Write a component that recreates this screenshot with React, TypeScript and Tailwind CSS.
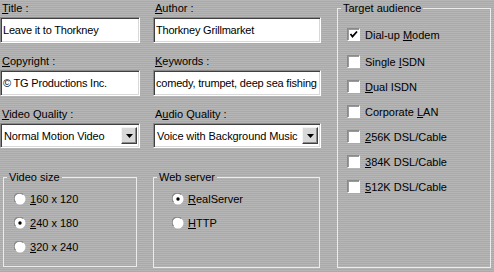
import React from "react";

const sunken =
  "bg-white border border-t-[#8a8a8a] border-l-[#8a8a8a] border-b-white border-r-white shadow-[inset_1px_1px_0_#404040,inset_-1px_-1px_0_#d8d8d8]";

function Field({ label, value }: { label: React.ReactNode; value: string }) {
  return (
    <div className="flex flex-col">
      <div className="h-[16px] pl-[2px]">{label}</div>
      <div className={`h-[26px] ${sunken} flex items-center pl-[2px] tracking-[-0.2px] whitespace-nowrap overflow-hidden`}>
        {value}
      </div>
    </div>
  );
}

function Combo({ label, value }: { label: React.ReactNode; value: string }) {
  return (
    <div className="flex flex-col">
      <div className="h-[16px] pl-[2px]">{label}</div>
      <div className={`h-[25px] ${sunken} flex items-center justify-between pl-[3px] pr-[2px]`}>
        <span className="whitespace-nowrap tracking-[-0.1px]">{value}</span>
        <div className="w-[16px] h-[17px] bg-[#d8d8d8] border border-t-[#f4f4f4] border-l-[#f4f4f4] border-b-[#404040] border-r-[#404040] shadow-[inset_-1px_-1px_0_#8a8a8a] flex items-center justify-center">
          <svg width="7" height="4" viewBox="0 0 7 4">
            <path d="M0 0 H7 L3.5 4 Z" fill="black" />
          </svg>
        </div>
      </div>
    </div>
  );
}

function Radio({ checked }: { checked?: boolean }) {
  return (
    <svg width="12" height="12" viewBox="0 0 12 12" className="shrink-0">
      <circle cx="6" cy="6" r="5.5" fill="white" />
      <path d="M1.6 9.2 A5 5 0 0 1 9.2 1.6" stroke="#8a8a8a" strokeWidth="1.2" fill="none" />
      {checked && <circle cx="6" cy="6" r="1.7" fill="black" />}
    </svg>
  );
}

function Check({ checked }: { checked?: boolean }) {
  return (
    <div className="w-[13px] h-[13px] shrink-0 bg-white border border-t-[#8a8a8a] border-l-[#8a8a8a] border-b-white border-r-white shadow-[inset_1px_1px_0_#9a9a9a] flex items-center justify-center">
      {checked && (
        <svg width="9" height="9" viewBox="0 0 9 9">
          <path d="M1.5 4 L3.5 6.5 L8 1.5" stroke="black" strokeWidth="1.8" fill="none" />
        </svg>
      )}
    </div>
  );
}

const u = (c: string) => <span className="underline underline-offset-[1px]">{c}</span>;

export default function App() {
  const audiences: [React.ReactNode, boolean][] = [
    [<>Dial-up {u("M")}odem</>, true],
    [<>Single {u("I")}SDN</>, false],
    [<>{u("D")}ual ISDN</>, false],
    [<>Corporate {u("L")}AN</>, false],
    [<>{u("2")}56K DSL/Cable</>, false],
    [<>{u("3")}84K DSL/Cable</>, false],
    [<>{u("5")}12K DSL/Cable</>, false],
  ];

  return (
    <div className="w-[494px] h-[272px] overflow-hidden flex bg-[repeating-linear-gradient(to_bottom,#b6b6b6_0px,#b6b6b6_1px,#aaaaaa_1px,#aaaaaa_2px)] font-['Liberation_Sans',Arial,sans-serif] text-[11px] leading-[14px] text-black">
      <div className="w-[321px] pt-[1px] grid grid-cols-[140px_168px] gap-x-[13px] gap-y-[11px] content-start">
        <Field label={<>{u("T")}itle :</>} value="Leave it to Thorkney" />
        <Field label={<>{u("A")}uthor :</>} value="Thorkney Grillmarket" />
        <Field label={<>{u("C")}opyright :</>} value="© TG Productions Inc." />
        <Field label={<>{u("K")}eywords :</>} value="comedy, trumpet, deep sea fishing" />
        <Combo label={<>{u("V")}ideo Quality :</>} value="Normal Motion Video" />
        <Combo label={<>A{u("u")}dio Quality :</>} value="Voice with Background Music" />

        <fieldset className="mt-[11px] ml-[3px] w-[134px] h-[97px] border border-[#ececec]">
          <legend className="ml-[3px] px-[2px]">Video size</legend>
          <div className="flex flex-col pt-[3px] pl-[10px]">
            <div className="h-[24px] flex items-center gap-[4px]">
              <Radio />
              <span>{u("1")}60 x 120</span>
            </div>
            <div className="h-[24px] flex items-center gap-[4px]">
              <Radio checked />
              <span>{u("2")}40 x 180</span>
            </div>
            <div className="h-[24px] flex items-center gap-[4px]">
              <Radio />
              <span>{u("3")}20 x 240</span>
            </div>
          </div>
        </fieldset>

        <fieldset className="mt-[11px] w-[167px] h-[98px] border border-[#ececec]">
          <legend className="ml-[3px] px-[2px]">Web server</legend>
          <div className="flex flex-col pt-[3px] pl-[18px]">
            <div className="h-[24px] flex items-center gap-[4px]">
              <Radio checked />
              <span>{u("R")}ealServer</span>
            </div>
            <div className="h-[24px] flex items-center gap-[4px]">
              <Radio />
              <span>{u("H")}TTP</span>
            </div>
          </div>
        </fieldset>
      </div>

      <fieldset className="ml-[16px] mt-[1px] w-[154px] h-[267px] border border-[#ececec]">
        <legend className="ml-[3px] px-[2px]">Target audience</legend>
        <div className="flex flex-col pt-[7px] pl-[9px]">
          {audiences.map(([label, on], i) => (
            <div key={i} className={`h-[25px] flex items-center gap-[5px] ${i === 0 ? "mb-[2px]" : ""}`}>
              <Check checked={on} />
              <span>{label}</span>
            </div>
          ))}
        </div>
      </fieldset>
    </div>
  );
}
